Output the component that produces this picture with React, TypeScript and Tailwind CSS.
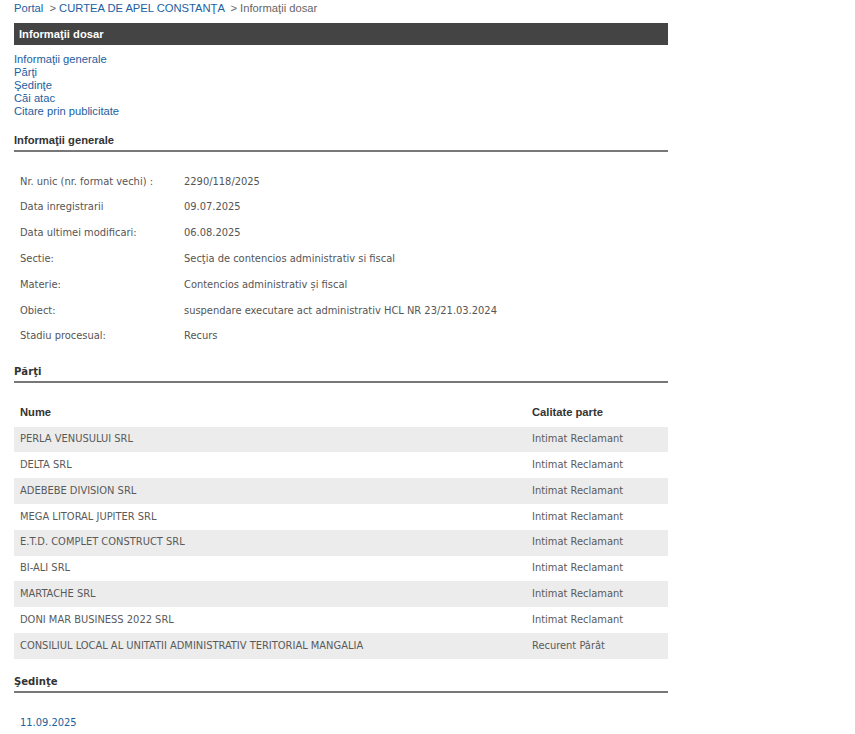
import React from "react";

const info: [string, string][] = [
  ["Nr. unic (nr. format vechi) :", "2290/118/2025"],
  ["Data inregistrarii", "09.07.2025"],
  ["Data ultimei modificari:", "06.08.2025"],
  ["Sectie:", "Secţia de contencios administrativ si fiscal"],
  ["Materie:", "Contencios administrativ și fiscal"],
  ["Obiect:", "suspendare executare act administrativ HCL NR 23/21.03.2024"],
  ["Stadiu procesual:", "Recurs"],
];

const parti: [string, string][] = [
  ["PERLA VENUSULUI SRL", "Intimat Reclamant"],
  ["DELTA SRL", "Intimat Reclamant"],
  ["ADEBEBE DIVISION SRL", "Intimat Reclamant"],
  ["MEGA LITORAL JUPITER SRL", "Intimat Reclamant"],
  ["E.T.D. COMPLET CONSTRUCT SRL", "Intimat Reclamant"],
  ["BI-ALI SRL", "Intimat Reclamant"],
  ["MARTACHE SRL", "Intimat Reclamant"],
  ["DONI MAR BUSINESS 2022 SRL", "Intimat Reclamant"],
  ["CONSILIUL LOCAL AL UNITATII ADMINISTRATIV TERITORIAL MANGALIA", "Recurent Pârât"],
];

const arial = "font-['Liberation_Sans',Arial,sans-serif]";
const tahoma = "font-['DejaVu_Sans_Condensed','DejaVu_Sans',sans-serif]";

function Heading({ children, tight }: { children: React.ReactNode; tight?: boolean }) {
  return (
    <div
      className={`${arial} text-[11.2px] font-bold text-[#333] border-b-2 border-[#777] h-[22px] flex items-end ${
        tight ? "pb-0" : "pb-[1px]"
      }`}
    >
      {children}
    </div>
  );
}

export default function App() {
  return (
    <div className="bg-white w-[855px] h-[734px] overflow-hidden">
      <div className="ml-[14px] w-[654px]">
        <div className={`${arial} text-[11.2px] h-[15px] leading-[15px] pt-[1px] text-[#666]`}>
          <span className="text-[#2260a0]">Portal</span>
          <span> &nbsp;&gt; </span>
          <span className="text-[#2260a0]">CURTEA DE APEL CONSTANŢA</span>
          <span> &nbsp;&gt; Informaţii dosar</span>
        </div>
        <div className={`${arial} mt-[8px] h-[22px] bg-[#444] text-white text-[11.2px] font-bold flex items-center pl-[5px]`}>
          Informaţii dosar
        </div>
        <div className={`${arial} mt-[8px] text-[11.2px] leading-[13px] text-[#2260a0] flex flex-col`}>
          <span>Informaţii generale</span>
          <span>Părţi</span>
          <span>Şedinţe</span>
          <span>Căi atac</span>
          <span>Citare prin publicitate</span>
        </div>
        <div className="mt-[12px]">
          <Heading>Informaţii generale</Heading>
        </div>
        <div className={`${tahoma} mt-[17px] text-[11px] text-[#555]`}>
          {info.map(([k, v]) => (
            <div key={k} className="flex h-[25.8px] items-center">
              <div className="w-[170px] pl-[6px]">{k}</div>
              <div>{v}</div>
            </div>
          ))}
        </div>
        <div className="mt-[11px]">
          <Heading tight>
            <span className={tahoma}>Părţi</span>
          </Heading>
        </div>
        <div className={`${tahoma} mt-[17px] text-[11px]`}>
          <div className={`${arial} flex h-[27px] items-center pb-[1px] text-[11.2px] font-bold text-[#333]`}>
            <div className="flex-1 pl-[6px]">Nume</div>
            <div className="w-[136px]">Calitate parte</div>
          </div>
          {parti.map(([n, c], i) => (
            <div
              key={n}
              className={`flex h-[25.8px] items-center text-[#5a5a5a] ${i % 2 === 0 ? "bg-[#ececec]" : ""}`}
            >
              <div className="flex-1 pl-[6px]">{n}</div>
              <div className="w-[136px]">{c}</div>
            </div>
          ))}
        </div>
        <div className="mt-[12px]">
          <Heading tight>
            <span className={tahoma}>Şedinţe</span>
          </Heading>
        </div>
        <div className={`${tahoma} mt-[22px] pl-[6px] text-[11px] text-[#2260a0]`}>11.09.2025</div>
      </div>
    </div>
  );
}
